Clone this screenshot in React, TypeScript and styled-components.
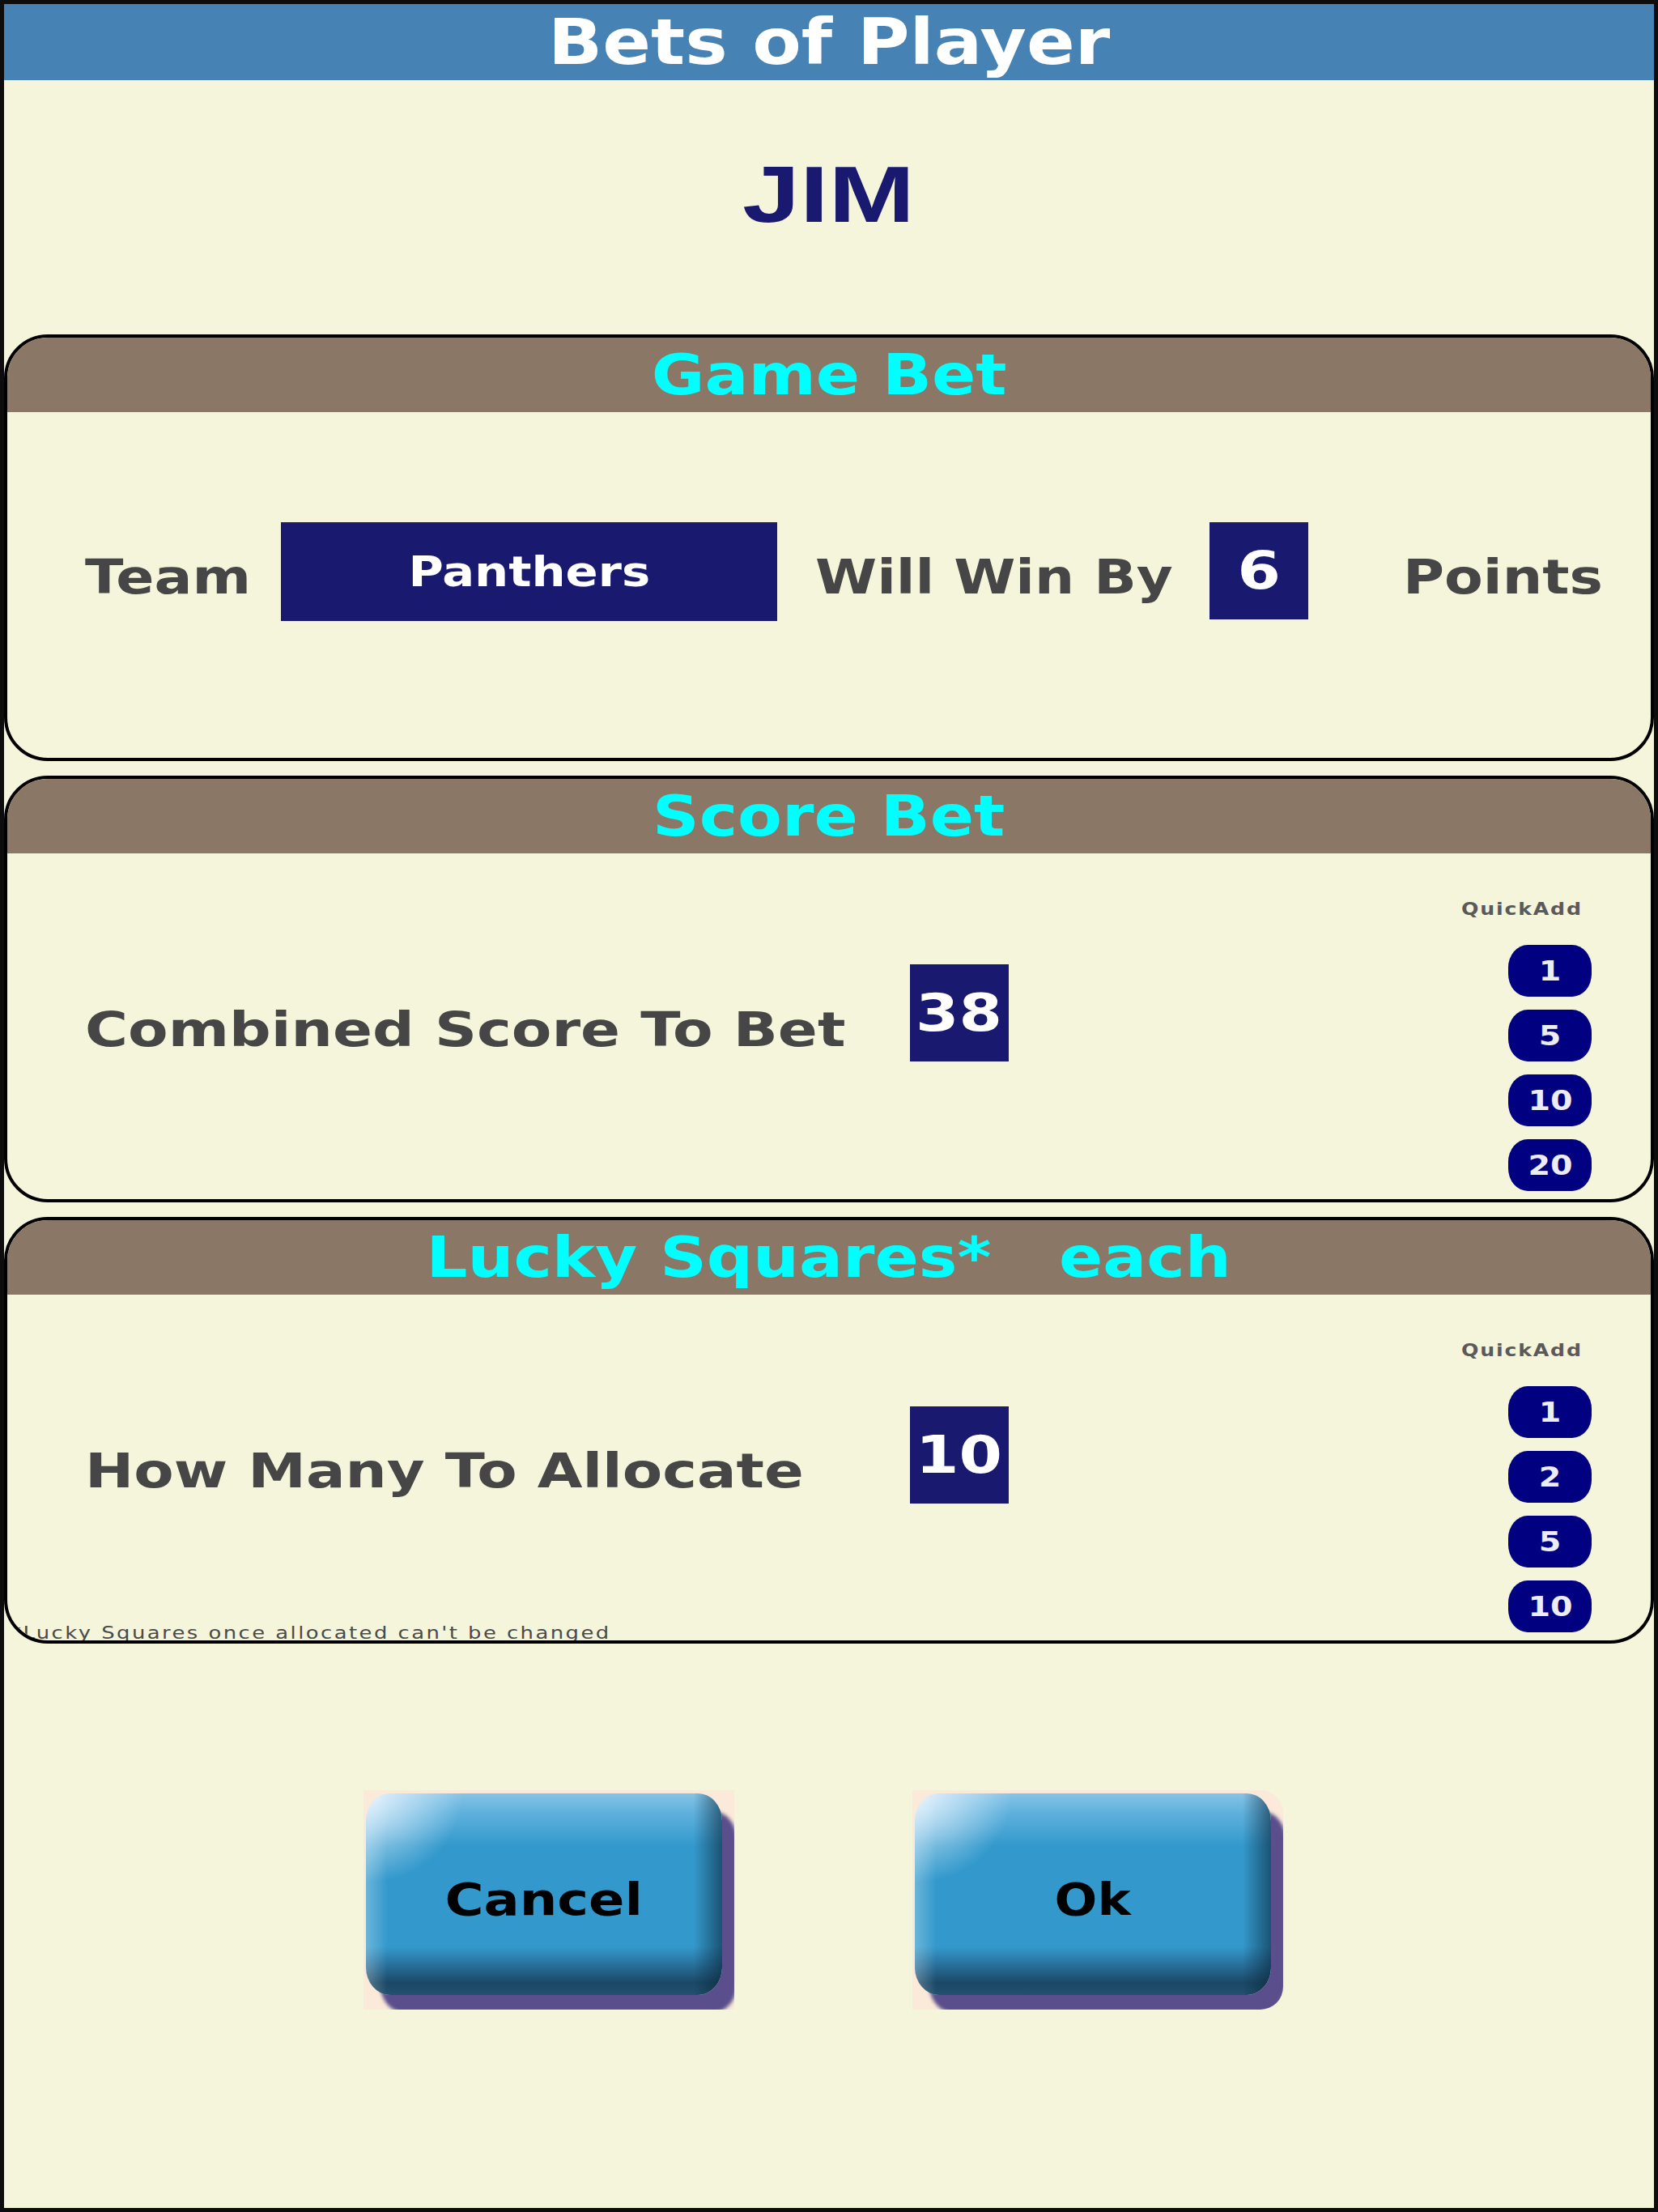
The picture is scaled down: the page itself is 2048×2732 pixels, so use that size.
import React from 'react';
import styled, { createGlobalStyle } from 'styled-components';

const GlobalStyle = createGlobalStyle`
  html, body { margin: 0; padding: 0; background: #f5f5dc; }
  * { box-sizing: border-box; }
  body { font-family: "DejaVu Sans", "Liberation Sans", sans-serif; }
`;

/* the reference renders text horizontally widened; this span reproduces that */
const Wide = styled.span<{ $sx?: number; $origin?: string }>`
  display: inline-block;
  white-space: pre;
  transform: scaleX(${(p) => p.$sx ?? 1.18});
  transform-origin: ${(p) => p.$origin ?? 'center'};
`;

const Screen = styled.div`
  width: 2048px;
  height: 2732px;
  border: 5px solid #0d0d0d;
  background: #f5f5dc;
  display: flex;
  flex-direction: column;
`;

const TitleBar = styled.header`
  height: 94px;
  flex: none;
  background: #4682b4;
  color: #ffffff;
  font-size: 78px;
  font-weight: 700;
  line-height: 1;
  display: flex;
  align-items: center;
  justify-content: center;
`;

const PlayerName = styled.div`
  height: 314px;
  flex: none;
  padding-bottom: 34px;
  display: flex;
  align-items: center;
  justify-content: center;
  color: #191970;
  font-family: "Liberation Sans", Arial, sans-serif;
  font-size: 99px;
  font-weight: 700;
  line-height: 1;
`;

const Card = styled.section<{ $mt?: number }>`
  position: relative;
  height: 527px;
  flex: none;
  margin-top: ${(p) => p.$mt ?? 0}px;
  border: 4px solid #000;
  border-radius: 54px;
  overflow: hidden;
  display: flex;
  flex-direction: column;
`;

const CardHeader = styled.div`
  height: 92px;
  flex: none;
  background: #8b7765;
  color: #00ffff;
  font-size: 69px;
  font-weight: 700;
  line-height: 1;
  display: flex;
  align-items: center;
  justify-content: center;
`;

const GameBody = styled.div`
  flex: 1;
  padding: 136px 0 0 96px;
`;

const GameRow = styled.div`
  display: grid;
  grid-template-columns: 242px 613px 534px 122px 1fr;
  align-items: start;
  height: 122px;
`;

const Label = styled.span<{ $pl?: number; $mt?: number; $sx?: number }>`
  display: block;
  padding-left: ${(p) => p.$pl ?? 0}px;
  margin-top: ${(p) => p.$mt ?? 0}px;
  color: #464646;
  font-size: 59px;
  font-weight: 700;
  line-height: 1;
  white-space: nowrap;
  transform: scaleX(${(p) => p.$sx ?? 1.18});
  transform-origin: ${(p) => p.$pl ?? 0}px 50%;
`;

const TeamBox = styled.div`
  width: 613px;
  height: 122px;
  background: #191970;
  color: #ffffff;
  font-size: 51px;
  font-weight: 700;
  line-height: 1;
  display: flex;
  align-items: center;
  justify-content: center;
`;

const ValueBox = styled.div<{ $mt?: number }>`
  margin-top: ${(p) => p.$mt ?? 0}px;
  width: 122px;
  height: 120px;
  background: #191970;
  color: #ffffff;
  font-size: 64px;
  font-weight: 700;
  line-height: 1;
  display: flex;
  align-items: center;
  justify-content: center;
`;

const BetBody = styled.div`
  position: relative;
  flex: 1;
  display: grid;
  grid-template-columns: 1019px 122px 1fr;
  align-items: start;
  padding: 0 73px 0 96px;
`;

const QuickColumn = styled.div`
  justify-self: end;
  margin-top: 59px;
  display: flex;
  flex-direction: column;
  align-items: flex-end;
`;

const QuickTitle = styled.span`
  margin-right: 11px;
  color: #5a5a5a;
  font-size: 21px;
  font-weight: 700;
  letter-spacing: 1.5px;
  line-height: 1;
`;

const QuickList = styled.div`
  margin-top: 33px;
  display: flex;
  flex-direction: column;
  gap: 16px;
`;

const QuickButton = styled.button`
  width: 103px;
  height: 64px;
  border: none;
  border-radius: 24px / 28px;
  background: #000080;
  color: #ececf6;
  font-family: inherit;
  font-size: 33px;
  font-weight: 700;
  line-height: 1;
  padding: 0;
  display: flex;
  align-items: center;
  justify-content: center;
`;

const Footnote = styled.span`
  position: absolute;
  left: 4px;
  bottom: -2px;
  color: #4a4a4a;
  font-size: 21px;
  letter-spacing: 2px;
  line-height: 1;
`;

const ButtonRow = styled.div`
  margin-top: 181px;
  padding-right: 14px;
  display: flex;
  justify-content: center;
  gap: 220px;
`;

const ButtonTile = styled.div<{ $round?: boolean }>`
  width: 458px;
  height: 271px;
  padding: 4px 15px 18px 3px;
  background: #fbe9d9;
  overflow: hidden;
  border-radius: ${(p) => (p.$round ? '0 28px 28px 0' : '0')};
`;

const ButtonFace = styled.button`
  width: 100%;
  height: 100%;
  border: none;
  border-radius: 30px / 34px;
  padding: 14px 0 0 0;
  color: #000;
  font-family: inherit;
  font-size: 55px;
  font-weight: 700;
  line-height: 1;
  box-shadow: 18px 22px 4px #5a4f8c;
  background:
    radial-gradient(ellipse 120px 110px at 0% 0%, rgba(236, 246, 255, 0.95), rgba(236, 246, 255, 0) 100%),
    linear-gradient(to right, rgba(255, 255, 255, 0.28) 0%, rgba(255, 255, 255, 0) 6%, rgba(0, 0, 0, 0) 92%, rgba(10, 36, 56, 0.6) 100%),
    linear-gradient(to bottom, #86c4e7 0%, #5eb0dc 10%, #3399cc 26%, #3399cc 76%, #2a75a2 84%, #1b4866 94%, #22506e 100%);
`;

const quick1 = [1, 5, 10, 20];
const quick2 = [1, 2, 5, 10];

function Quick({ values }: { values: number[] }) {
  return (
    <QuickColumn>
      <QuickTitle>
        <Wide $sx={1.2} $origin="right">QuickAdd</Wide>
      </QuickTitle>
      <QuickList>
        {values.map((v) => (
          <QuickButton key={v}>
            <Wide $sx={1.2}>{String(v)}</Wide>
          </QuickButton>
        ))}
      </QuickList>
    </QuickColumn>
  );
}

export default function App() {
  return (
    <>
      <GlobalStyle />
      <Screen>
        <TitleBar>
          <Wide $sx={1.13}>Bets of Player</Wide>
        </TitleBar>
        <PlayerName>
          <Wide $sx={1.29}>JIM</Wide>
        </PlayerName>

        <Card>
          <CardHeader>
            <Wide $sx={1.16}>Game Bet</Wide>
          </CardHeader>
          <GameBody>
            <GameRow>
              <Label $mt={38} $sx={1.18}>Team</Label>
              <TeamBox>
                <Wide $sx={1.16}>Panthers</Wide>
              </TeamBox>
              <Label $pl={47} $mt={38} $sx={1.17}>Will Win By</Label>
              <ValueBox>
                <Wide $sx={1.2}>6</Wide>
              </ValueBox>
              <Label $pl={117} $mt={38}>Points</Label>
            </GameRow>
          </GameBody>
        </Card>

        <Card $mt={18}>
          <CardHeader>
            <Wide $sx={1.16}>Score Bet</Wide>
          </CardHeader>
          <BetBody>
            <Label $mt={188} $sx={1.225}>Combined Score To Bet</Label>
            <ValueBox $mt={137}>
              <Wide $sx={1.2}>38</Wide>
            </ValueBox>
            <Quick values={quick1} />
          </BetBody>
        </Card>

        <Card $mt={18}>
          <CardHeader>
            <Wide $sx={1.16}>{'Lucky Squares*   each'}</Wide>
          </CardHeader>
          <BetBody>
            <Label $mt={188} $sx={1.22}>How Many To Allocate</Label>
            <ValueBox $mt={138}>
              <Wide $sx={1.2}>10</Wide>
            </ValueBox>
            <Quick values={quick2} />
            <Footnote>
              <Wide $sx={1.23} $origin="left">*Lucky Squares once allocated can't be changed</Wide>
            </Footnote>
          </BetBody>
        </Card>

        <ButtonRow>
          <ButtonTile>
            <ButtonFace>
              <Wide $sx={1.19}>Cancel</Wide>
            </ButtonFace>
          </ButtonTile>
          <ButtonTile $round>
            <ButtonFace>
              <Wide $sx={1.13}>Ok</Wide>
            </ButtonFace>
          </ButtonTile>
        </ButtonRow>
      </Screen>
    </>
  );
}
